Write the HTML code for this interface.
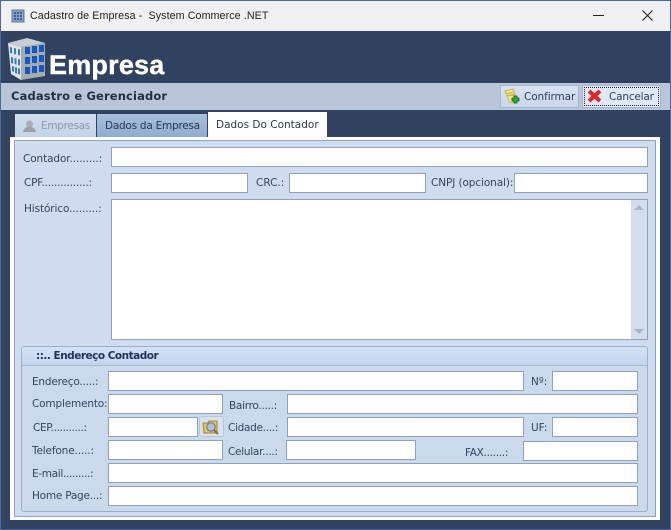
<!DOCTYPE html>
<html><head><meta charset="utf-8">
<style>
html,body{margin:0;padding:0}
body{width:671px;height:530px;position:relative;overflow:hidden;background:#30425f;font-family:"DejaVu Sans","Liberation Sans",sans-serif;font-size:10.5px;color:#35475f}
div,span,svg{position:absolute;box-sizing:border-box}
.i{background:#fff;border:1px solid #90a2bb;height:20px}
.l{white-space:nowrap;line-height:14px;color:#34465f}
</style></head><body>
<div style="left:0;top:0;width:671px;height:530px;border:1px solid #4c6a99"></div>
<div style="left:1px;top:1px;width:669px;height:30px;background:#f0f0f0"></div>
<svg style="left:11px;top:9px" width="14" height="14" viewBox="0 0 14 14"><rect x="1" y="1" width="12" height="12" fill="#8c9fb8" stroke="#66788f"/><path d="M3 3h2v2H3zM6 3h2v2H6zM9 3h2v2H9zM3 6h2v2H3zM6 6h2v2H6zM9 6h2v2H9zM3 9h2v2H3zM6 9h2v2H6zM9 9h2v2H9z" fill="#3a5fb0"/></svg>
<div class="l" style="left:30px;top:9px;font-family:'Liberation Sans',sans-serif;font-size:10.7px;letter-spacing:.09px;color:#222;white-space:pre">Cadastro de Empresa -  System Commerce .NET</div>
<svg style="left:593px;top:15px" width="11" height="2"><rect width="11" height="1" fill="#222"/></svg>
<svg style="left:642px;top:10px" width="11" height="11" viewBox="0 0 11 11"><path d="M.5.5l10 10M10.500.5l-10 10" stroke="#222" stroke-width="1.100"/></svg>

<svg style="left:7px;top:35px" width="42" height="46" viewBox="0 0 42 46">
<path d="M1 8L14 12V45L4 39Z" fill="#dfe3e3"/>
<path d="M14 12L38 8V41L14 45Z" fill="#a7abac"/>
<path d="M1 8L20 3 38 8 14 12Z" fill="#c9ced0"/>
<g fill="#1458c8"><path d="M18 12h5v7h-5zM25 11h5v7h-5zM32 10h5v7h-5zM18 22h5v7h-5zM25 21h5v7h-5zM32 20h5v7h-5zM18 32h5v7h-5zM25 31h5v7h-5zM32 30h5v7h-5z"/></g>
<g fill="#3b79c5"><path d="M3 12l2 .5v6L3 18zM7 13l2 .5v6L7 19zM11 14l2 .5v6l-2-.5zM4 22l2 .5v6L4 28zM7.500 23l2 .5v6l-2-.5zM11 24l2 .5v6l-2-.5zM5 31l2 .6v5.500L5 36zM8 32l2 .6v6L8 38zM11 33l2 .6v6l-2-.6z"/></g>
</svg>
<div style="left:49px;top:49px;font-family:'Liberation Sans',sans-serif;font-weight:700;font-size:27px;line-height:32px;color:#fff;letter-spacing:.2px;white-space:nowrap;-webkit-text-stroke:.4px #fff">Empresa</div>

<div style="left:1px;top:83px;width:669px;height:27px;background:#b9c6d9"></div>
<div class="l" style="left:11px;top:89px;font-weight:700;font-size:11.500px;color:#22303f;letter-spacing:.14px">Cadastro e Gerenciador</div>

<div style="left:500px;top:85px;width:79px;height:23px;background:linear-gradient(#d8e3f3,#c9d7ea);border:1px solid #a7b6ca"></div>
<svg style="left:504px;top:88px" width="17" height="17" viewBox="0 0 17 17"><path d="M1 3L9 1 12 9 5 12Z" fill="#f3e48a" stroke="#c9b14c"/><path d="M3 6l6-2M4 8l6-2" stroke="#c9b14c"/><path d="M3 8l8-1 1 6-6 2Z" fill="#f3e48a" stroke="#c9b14c" stroke-width=".7"/><path d="M10 8h3v2h2v3h-2v2h-3v-2H8v-3h2Z" fill="#2fb02f" stroke="#116611" stroke-width=".8"/></svg>
<div class="l" style="left:524px;top:90px;color:#2f4160;letter-spacing:-.1px">Confirmar</div>

<div style="left:582px;top:85px;width:79px;height:23px;background:#dfe8f5;border:1px solid #a7b6ca"></div>
<div style="left:584px;top:87px;width:75px;height:19px;border:1px dotted #223"></div>
<svg style="left:587px;top:89px" width="15" height="14" viewBox="0 0 15 14"><path d="M2 2l11 10M13 2L2 12" stroke="#e1272c" stroke-width="4"/></svg>
<div class="l" style="left:609px;top:90px;color:#2f4160;letter-spacing:-.2px">Cancelar</div>

<div style="left:15px;top:114px;width:81px;height:24px;background:linear-gradient(#d0ddef,#c4d3e8)"></div>
<svg style="left:22px;top:119px" width="15" height="14" viewBox="0 0 15 14"><circle cx="7.500" cy="5" r="3.500" fill="#a9aeb2"/><path d="M1 13c1-4 3-5 6.500-5S13 9 14 13Z" fill="#9ba1a6"/></svg>
<div class="l" style="left:41px;top:119px;color:#8d9aad;letter-spacing:-.3px">Empresas</div>
<div style="left:97px;top:114px;width:110px;height:24px;background:linear-gradient(#a8bfdc,#8fabd0)"></div>
<div class="l" style="left:105px;top:119px;color:#26364f;letter-spacing:-.25px">Dados da Empresa</div>
<div style="left:208px;top:112px;width:119px;height:26px;background:#fff"></div>
<div class="l" style="left:216px;top:118px;color:#2b3a50">Dados Do Contador</div>

<div style="left:10px;top:137px;width:650px;height:383px;background:#fff"></div>
<div style="left:14px;top:140px;width:642px;height:377px;background:#cfdcef;border:1px solid #8fa3bf"></div>

<div class="l" style="left:23px;top:152px;letter-spacing:-.11px">Contador.........:</div>
<div class="i" style="left:111px;top:147px;width:537px"></div>
<div class="l" style="left:24px;top:176px;letter-spacing:-.2px">CPF...............:</div>
<div class="i" style="left:111px;top:173px;width:137px"></div>
<div class="l" style="left:256px;top:176px">CRC.:</div>
<div class="i" style="left:289px;top:173px;width:137px"></div>
<div class="l" style="left:431px;top:176px;letter-spacing:-.1px">CNPJ (opcional):</div>
<div class="i" style="left:514px;top:173px;width:134px"></div>
<div class="l" style="left:24px;top:202px;letter-spacing:-.11px">Histórico.........:</div>
<div class="i" style="left:111px;top:199px;width:537px;height:141px"></div>
<div style="left:631px;top:200px;width:16px;height:139px;background:#d2deee"></div>
<svg style="left:633px;top:204px" width="12" height="7"><path d="M6 1l5 5H1Z" fill="#a9b5c3"/></svg>
<svg style="left:633px;top:328px" width="12" height="7"><path d="M6 6l5-5H1Z" fill="#a9b5c3"/></svg>

<div style="left:21px;top:346px;width:627px;height:166px;background:#cbd9ec;border:1px solid #9cafc8;border-radius:3px"></div>
<div style="left:22px;top:347px;width:625px;height:19px;background:linear-gradient(#d3e2f6,#c2d4ec);border-bottom:1px solid #a9bbd3;border-radius:2px 2px 0 0"></div>
<div class="l" style="left:36px;top:349px;font-weight:700;font-size:10.500px;color:#1e3358;letter-spacing:-.5px">::.. Endereço Contador</div>

<div class="l" style="left:32px;top:375px;letter-spacing:-.2px">Endereço.....:</div>
<div class="i" style="left:108px;top:371px;width:416px"></div>
<div class="l" style="left:531px;top:375px">Nº:</div>
<div class="i" style="left:552px;top:371px;width:86px"></div>

<div class="l" style="left:32px;top:397px;letter-spacing:-.17px">Complemento:</div>
<div class="i" style="left:108px;top:394px;width:115px"></div>
<div class="l" style="left:229px;top:399px;letter-spacing:-.27px">Bairro.....:</div>
<div class="i" style="left:287px;top:394px;width:351px"></div>

<div class="l" style="left:33px;top:421px;letter-spacing:-.35px">CEP...........:</div>
<div class="i" style="left:108px;top:417px;width:90px"></div>
<div style="left:199px;top:416px;width:25px;height:21px;background:#d8e2f0;border:1px solid #b6c5d8;border-radius:3px"></div>
<svg style="left:202px;top:419px" width="18" height="16" viewBox="0 0 18 16"><path d="M1 4h5l1-2h8v12H2Z" fill="#e4c868" stroke="#a08425"/><circle cx="9" cy="8" r="4.200" fill="#a9c0dc" stroke="#6f7f90" stroke-width="1.200"/><path d="M12 11l4 4" stroke="#9a6b24" stroke-width="2"/></svg>
<div class="l" style="left:228px;top:421px;letter-spacing:-.3px">Cidade....:</div>
<div class="i" style="left:287px;top:417px;width:237px"></div>
<div class="l" style="left:531px;top:421px">UF:</div>
<div class="i" style="left:552px;top:417px;width:86px"></div>

<div class="l" style="left:32px;top:444px;letter-spacing:-.15px">Telefone.....:</div>
<div class="i" style="left:108px;top:440px;width:115px"></div>
<div class="l" style="left:228px;top:445px;letter-spacing:-.27px">Celular....:</div>
<div class="i" style="left:286px;top:440px;width:130px"></div>
<div class="l" style="left:465px;top:446px;letter-spacing:-.3px">FAX.......:</div>
<div class="i" style="left:523px;top:441px;width:115px"></div>

<div class="l" style="left:32px;top:467px;letter-spacing:-.33px">E-mail.........:</div>
<div class="i" style="left:108px;top:463px;width:530px"></div>
<div class="l" style="left:32px;top:489px;letter-spacing:-.23px">Home Page...:</div>
<div class="i" style="left:108px;top:486px;width:530px"></div>
</body></html>
